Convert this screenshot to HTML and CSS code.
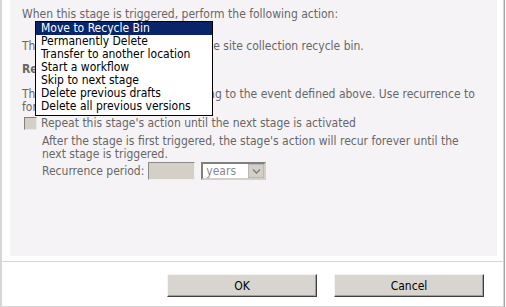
FILE: index.html
```
<!DOCTYPE html>
<html lang="en">
<head>
    <meta charset="UTF-8">
    <title>Stage properties</title>
    <link rel="stylesheet" href="styles.css">
</head>
<body>
    <div class="dialog">
        <section class="panel">
            <p class="lead">When this stage is triggered, perform the following action:</p>

            <!-- open dropdown of the action select -->
            <ul class="action-list">
                <li class="selected">Move to Recycle Bin</li>
                <li>Permanently Delete</li>
                <li>Transfer to another location</li>
                <li>Start a workflow</li>
                <li>Skip to next stage</li>
                <li>Delete previous drafts</li>
                <li>Delete all previous versions</li>
            </ul>

            <p class="note">This action will move the item to the site collection recycle bin.</p>

            <p class="heading">Recurrence</p>
            <p class="info">This stage's action will run according to the event defined above. Use recurrence to<br>force the action to repeat.</p>

            <div class="repeat-row">
                <span class="check"></span>
                <span>Repeat this stage's action until the next stage is activated</span>
            </div>
            <div class="repeat-detail">
                <p>After the stage is first triggered, the stage's action will recur forever until the<br>next stage is triggered.</p>
                <div class="period">
                    <span>Recurrence period:</span>
                    <span class="num-box"></span>
                    <span class="unit-select">
                        <span class="unit-text">years</span>
                        <span class="unit-arrow">
                            <svg width="11" height="9" viewBox="0 0 11 9"><path d="M2 2.5 L5.5 6 L9 2.5" fill="none" stroke="#7a7a7a" stroke-width="1.3"/></svg>
                        </span>
                    </span>
                </div>
            </div>
        </section>

        <div class="footer">
            <button class="btn">OK</button>
            <button class="btn">Cancel</button>
        </div>
    </div>
</body>
</html>
```

FILE: styles.css
```
*{
    margin: 0;
    padding: 0;
    box-sizing: border-box;
}
body{
    background-color: white;
    font-family: "DejaVu Sans Condensed", "DejaVu Sans", sans-serif;
    font-size: 12px;
    color: #676767;
}
.dialog{
    width: 504px;
    height: 307px;
    border-left: 2px solid #d6d6d6;
    border-right: 1px solid #d6d6d6;
    box-shadow: 1px 0 0 #a3a3a3;
}
.panel{
    position: relative;
    height: 256px;
    margin: 0 6px 0 8px;
    padding: 8px 0 0 12px;
    background-color: #f6f3f6;
    line-height: 13px;
    white-space: nowrap;
}
.note{
    margin-top: 19px;
}
.heading{
    margin-top: 10px;
    font-weight: bold;
}
.info{
    margin-top: 12px;
}
.action-list{
    position: absolute;
    left: 25px;
    top: 21px;
    width: 178px;
    height: 95px;
    list-style: none;
    background-color: white;
    border: 1px solid black;
    color: black;
}
.action-list li{
    height: 13px;
    padding-left: 5px;
    line-height: 13px;
}
.action-list .selected{
    background-color: #0a246a;
    color: white;
}
.repeat-row{
    display: flex;
    align-items: center;
    gap: 4px;
    margin-top: 3px;
    margin-left: 2px;
    height: 13px;
}
.check{
    width: 13px;
    height: 13px;
    background-color: #d4d0c8;
    border: 1px solid;
    border-color: #808080 #e8e8e8 #e8e8e8 #808080;
}
.repeat-detail{
    margin-left: 20px;
    margin-top: 5px;
}
.period{
    display: flex;
    align-items: center;
    margin-top: 1px;
    height: 18px;
}
.num-box{
    width: 47px;
    height: 18px;
    margin-left: 4px;
    background-color: #d4d0c8;
    border: 1px solid;
    border-color: #8a8a8a #f0f0f0 #f0f0f0 #8a8a8a;
}
.unit-select{
    display: flex;
    align-items: center;
    width: 65px;
    height: 18px;
    margin-left: 6px;
    background-color: white;
    border: 2px solid;
    border-color: #808080 #d4d0c8 #d4d0c8 #808080;
}
.unit-text{
    flex: 1;
    padding-left: 3px;
    color: #8a8a8a;
}
.unit-arrow{
    display: flex;
    align-items: center;
    justify-content: center;
    width: 16px;
    height: 14px;
    background-color: #d4d0c8;
    border: 1px solid #b8b8b8;
}
.footer{
    display: flex;
    justify-content: flex-end;
    gap: 17px;
    margin-top: 5px;
    height: 46px;
    padding: 12px 19px 0 0;
    border-top: 1px solid #d6d6d6;
    border-bottom: 1px solid #d6d6d6;
}
.btn{
    width: 150px;
    height: 23px;
    font: inherit;
    color: black;
    background-color: #d8d5d0;
    border: 1px solid;
    border-color: #f4f4f4 #404040 #404040 #f4f4f4;
    box-shadow: inset -1px -1px 0 #a0a0a0;
}
```
